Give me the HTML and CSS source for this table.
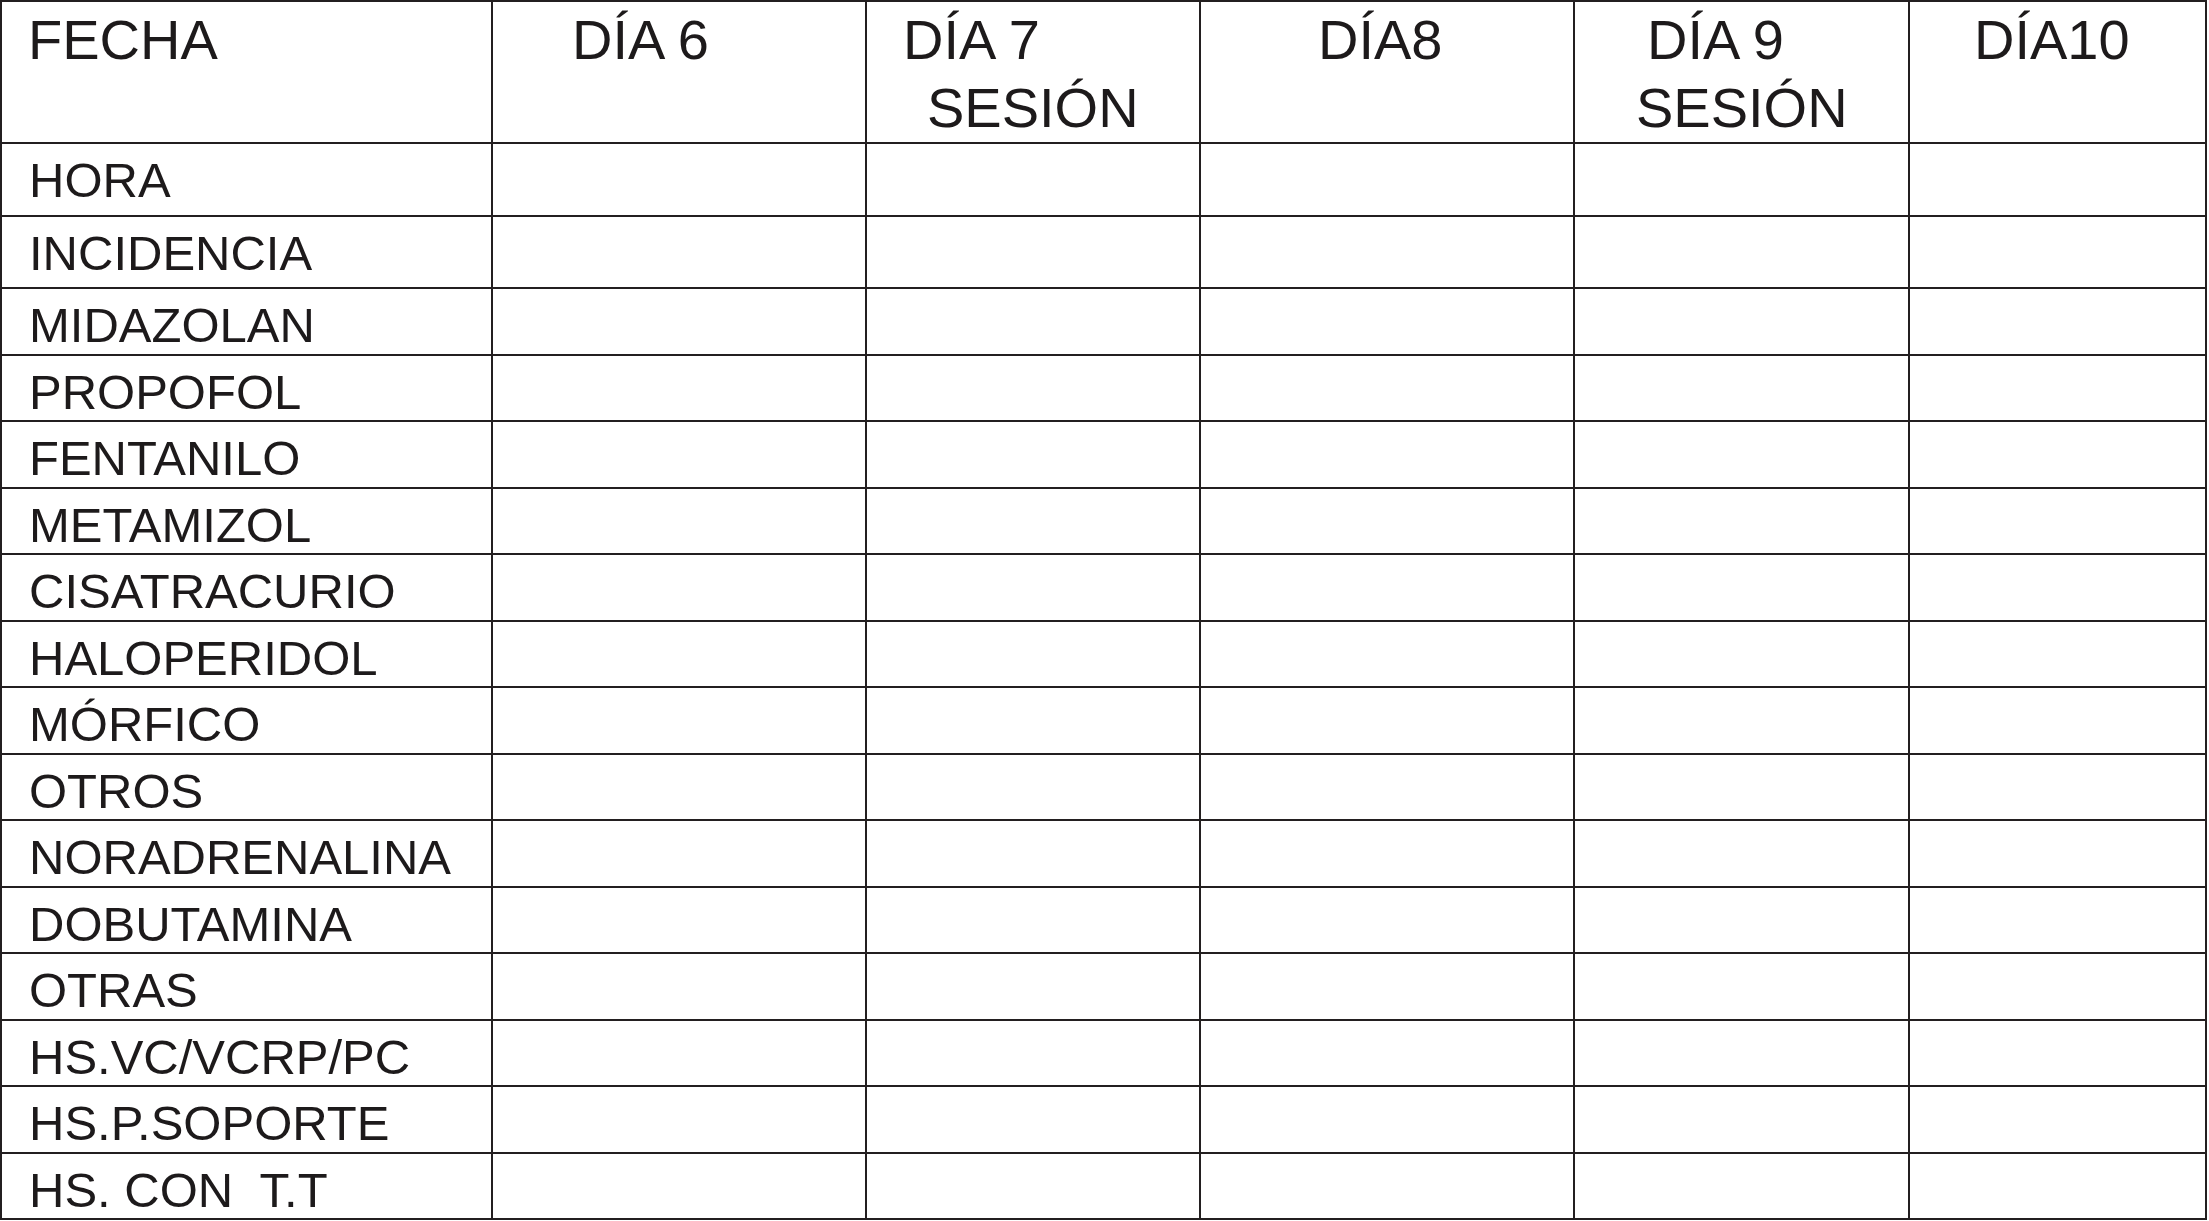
FILE: index.html
```html
<!DOCTYPE html>
<html lang="es">
<head>
<meta charset="utf-8">
<title>Hoja de registro</title>
<link rel="stylesheet" href="styles.css">
</head>
<body>
<div class="sheet">
  <div class="cell head h0"><span class="line">FECHA</span></div>
  <div class="cell head h6"><span class="line">DÍA 6</span></div>
  <div class="cell head h7"><span class="line l1">DÍA 7</span><span class="line l2">SESIÓN</span></div>
  <div class="cell head h8"><span class="line">DÍA8</span></div>
  <div class="cell head h9"><span class="line l1">DÍA 9</span><span class="line l2">SESIÓN</span></div>
  <div class="cell head h10"><span class="line">DÍA10</span></div>

  <div class="cell label">HORA</div><div class="cell"></div><div class="cell"></div><div class="cell"></div><div class="cell"></div><div class="cell"></div>
  <div class="cell label">INCIDENCIA</div><div class="cell"></div><div class="cell"></div><div class="cell"></div><div class="cell"></div><div class="cell"></div>
  <div class="cell label">MIDAZOLAN</div><div class="cell"></div><div class="cell"></div><div class="cell"></div><div class="cell"></div><div class="cell"></div>
  <div class="cell label">PROPOFOL</div><div class="cell"></div><div class="cell"></div><div class="cell"></div><div class="cell"></div><div class="cell"></div>
  <div class="cell label">FENTANILO</div><div class="cell"></div><div class="cell"></div><div class="cell"></div><div class="cell"></div><div class="cell"></div>
  <div class="cell label">METAMIZOL</div><div class="cell"></div><div class="cell"></div><div class="cell"></div><div class="cell"></div><div class="cell"></div>
  <div class="cell label">CISATRACURIO</div><div class="cell"></div><div class="cell"></div><div class="cell"></div><div class="cell"></div><div class="cell"></div>
  <div class="cell label">HALOPERIDOL</div><div class="cell"></div><div class="cell"></div><div class="cell"></div><div class="cell"></div><div class="cell"></div>
  <div class="cell label">MÓRFICO</div><div class="cell"></div><div class="cell"></div><div class="cell"></div><div class="cell"></div><div class="cell"></div>
  <div class="cell label">OTROS</div><div class="cell"></div><div class="cell"></div><div class="cell"></div><div class="cell"></div><div class="cell"></div>
  <div class="cell label">NORADRENALINA</div><div class="cell"></div><div class="cell"></div><div class="cell"></div><div class="cell"></div><div class="cell"></div>
  <div class="cell label">DOBUTAMINA</div><div class="cell"></div><div class="cell"></div><div class="cell"></div><div class="cell"></div><div class="cell"></div>
  <div class="cell label">OTRAS</div><div class="cell"></div><div class="cell"></div><div class="cell"></div><div class="cell"></div><div class="cell"></div>
  <div class="cell label">HS.VC/VCRP/PC</div><div class="cell"></div><div class="cell"></div><div class="cell"></div><div class="cell"></div><div class="cell"></div>
  <div class="cell label">HS.P.SOPORTE</div><div class="cell"></div><div class="cell"></div><div class="cell"></div><div class="cell"></div><div class="cell"></div>
  <div class="cell label">HS. CON&nbsp; T.T</div><div class="cell"></div><div class="cell"></div><div class="cell"></div><div class="cell"></div><div class="cell"></div>
</div>
</body>
</html>
```

FILE: styles.css
```css
html, body {
  margin: 0;
  padding: 0;
  background: #ffffff;
}

body {
  font-family: "Liberation Sans", Arial, sans-serif;
  color: #1d1a1b;
}

.sheet {
  display: grid;
  width: 2207px;
  box-sizing: border-box;
  padding: 2px;
  gap: 2px;
  background: #231f20;
  grid-template-columns: 489px 372px 332px 372px 333px 295px;
  grid-template-rows: 140px 71px 70px repeat(14, 64.5px);
}

.cell {
  background: #ffffff;
  min-width: 0;
  overflow: hidden;
}

.head {
  font-size: 56px;
  line-height: 68px;
  padding-top: 4px;
  white-space: nowrap;
}

.head .line {
  display: block;
}

.h0 { padding-left: 26px; }
.h6 { padding-left: 79px; }
.h7 .l1 { padding-left: 36px; }
.h7 .l2 { padding-left: 60px; }
.h8 { padding-left: 117px; }
.h9 .l1 { padding-left: 72px; }
.h9 .l2 { padding-left: 61px; }
.h10 { padding-left: 64px; }

.label {
  font-size: 49px;
  line-height: 54px;
  padding-top: 9px;
  padding-left: 27px;
  white-space: nowrap;
}
```
